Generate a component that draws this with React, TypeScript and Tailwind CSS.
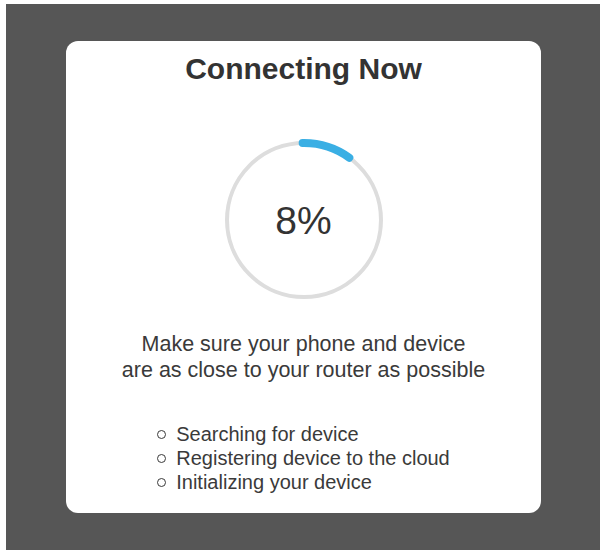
import React from 'react';

const steps = ['Searching for device', 'Registering device to the cloud', 'Initializing your device'];

const ProgressRing: React.FC<{ percent: number }> = ({ percent }) => {
  const r = 77;
  const c = 2 * Math.PI * r;
  // drawn arc runs a bit longer than the raw value, as in the app
  const dash = (37 / 360) * c;
  return (
    <div className="relative w-[170px] h-[170px]">
      <svg width="170" height="170" viewBox="0 0 170 170">
        <circle cx="85" cy="85" r={r} fill="none" stroke="#dddddd" strokeWidth="4" />
        <circle
          cx="85"
          cy="85"
          r={r}
          fill="none"
          stroke="#3aafe4"
          strokeWidth="8"
          strokeLinecap="round"
          strokeDasharray={`${dash} ${c}`}
          transform="rotate(-91 85 85)"
        />
      </svg>
      <div className="absolute inset-0 flex items-center justify-center text-[39px] leading-none text-[#333]">
        {percent}%
      </div>
    </div>
  );
};

export default function App() {
  return (
    <div className="w-[606px] h-[555px] bg-white pl-[6px] pt-[4px]" style={{ fontFamily: '"Liberation Sans", Arial, sans-serif' }}>
      <div className="w-[594px] h-[546px] bg-[#565656] pl-[60px] pt-[37px]">
        <div className="w-[475px] h-[472px] bg-white rounded-[12px] pt-[10px] flex flex-col items-center text-[#3a3a3a]">
          <h1 className="text-[30px] leading-[36px] font-bold text-[#333]">Connecting Now</h1>
          <div className="mt-[48px]">
            <ProgressRing percent={8} />
          </div>
          <p className="mt-[26px] text-[21.5px] leading-[26px] text-center">
            Make sure your phone and device
            <br />
            are as close to your router as possible
          </p>
          <ul className="mt-[39px] w-fit">
            {steps.map(s => (
              <li key={s} className="flex items-center gap-[10px] text-[20px] leading-[24px]">
                <span className="w-[9px] h-[9px] rounded-full border-[1.5px] border-[#3a3a3a] mt-[1px]" />
                {s}
              </li>
            ))}
          </ul>
        </div>
      </div>
    </div>
  );
}
